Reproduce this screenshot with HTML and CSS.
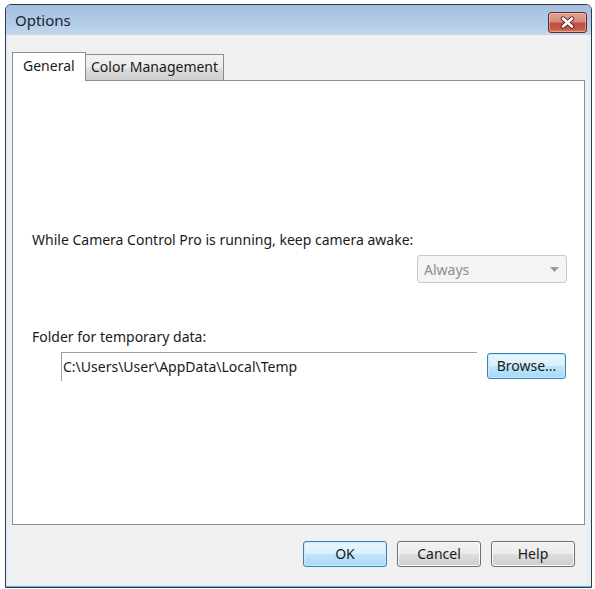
FILE: index.html
```html
<!DOCTYPE html>
<html>
<head>
<meta charset="utf-8">
<link rel="stylesheet" href="styles.css">
</head>
<body>
<div class="window">
  <div class="titlebar">
    <span class="title">Options</span>
    <div class="close">
      <svg width="19" height="13" viewBox="0 0 19 13">
        <path d="M5 2.5 L14 10.5 M14 2.5 L5 10.5" stroke="#5a2a24" stroke-width="4.4" stroke-linecap="round"/>
        <path d="M5 2.5 L14 10.5 M14 2.5 L5 10.5" stroke="#ffffff" stroke-width="2.6" stroke-linecap="round"/>
      </svg>
    </div>
  </div>
  <div class="client">
    <div class="tabs">
      <div class="tab selected">General</div>
      <div class="tab">Color Management</div>
    </div>
    <div class="panel">
      <div class="label first">While Camera Control Pro is running, keep camera awake:</div>
      <div class="combo-row">
        <div class="combo">
          <span>Always</span>
          <svg width="9" height="5" viewBox="0 0 9 5"><path d="M0 0 L9 0 L4.5 5 Z" fill="#9a9a9a"/></svg>
        </div>
      </div>
      <div class="label second">Folder for temporary data:</div>
      <div class="field-row">
        <div class="field">C:\Users\User\AppData\Local\Temp</div>
        <div class="btn hot browse">Browse...</div>
      </div>
    </div>
    <div class="footer">
      <div class="btn hot">OK</div>
      <div class="btn">Cancel</div>
      <div class="btn">Help</div>
    </div>
  </div>
</div>
</body>
</html>
```

FILE: styles.css
```css
html, body {
  margin: 0;
  padding: 0;
  background: #ffffff;
}
body {
  font-family: "Noto Sans", "Open Sans", sans-serif;
  font-size: 14px;
  color: #1a1a1a;
}
.window {
  margin: 4px 0 0 5px;
  width: 585px;
  height: 582px;
  border: 1px solid #2f3a44;
  border-radius: 6px 6px 0 0;
  background: #e6eef7;
  box-shadow: inset 0 -1px 0 #58bcdc;
  display: flex;
  flex-direction: column;
}
.titlebar {
  height: 30px;
  flex: none;
  display: flex;
  align-items: flex-start;
  justify-content: space-between;
  background: linear-gradient(to bottom, #a3bfdf 0%, #b2cbe6 60%, #c3d8ee 100%);
  border-radius: 5px 5px 0 0;
}
.title {
  font-size: 15px;
  color: #1b2430;
  margin: 5px 0 0 9px;
  line-height: 20px;
}
.close {
  width: 37px;
  height: 19px;
  margin: 7px 4px 0 0;
  border: 1px solid #5e2c27;
  border-radius: 3px;
  background: linear-gradient(to bottom, #e2a496 0%, #d4887a 45%, #c14f3b 55%, #c65b45 85%, #d6826b 100%);
  box-shadow: inset 0 0 0 1px rgba(255, 210, 200, 0.5);
  display: flex;
  align-items: center;
  justify-content: center;
}
.client {
  flex: 1;
  margin: 0 3px 3px 3px;
  background: #f0f0f0;
  padding: 17px 3px 0 3px;
  display: flex;
  flex-direction: column;
}
.tabs {
  height: 28px;
  display: flex;
  align-items: flex-end;
  position: relative;
  z-index: 2;
}
.tab {
  height: 26px;
  box-sizing: border-box;
  border: 1px solid #898c95;
  border-bottom: none;
  background: linear-gradient(to bottom, #f2f2f2 0%, #ebebeb 50%, #dddddd 51%, #cfcfcf 100%);
  padding: 0 5px;
  line-height: 24px;
  margin-left: -1px;
}
.tab.selected {
  height: 29px;
  margin-bottom: -1px;
  background: #ffffff;
  padding: 0 0 0 10px;
  line-height: 26px;
  margin-left: 0;
  width: 74px;
  position: relative;
  z-index: 3;
}
.panel {
  height: 445px;
  box-sizing: border-box;
  border: 1px solid #898c95;
  background: #ffffff;
  padding: 0 17px 0 19px;
  display: flex;
  flex-direction: column;
}
.label {
  line-height: 18px;
}
.label.first {
  margin-top: 150px;
}
.combo-row {
  display: flex;
  justify-content: flex-end;
  margin-top: 6px;
}
.combo {
  width: 150px;
  height: 28px;
  box-sizing: border-box;
  border: 1px solid #c9c9c9;
  border-radius: 3px;
  background: #f4f4f4;
  color: #8e8e8e;
  display: flex;
  align-items: center;
  justify-content: space-between;
  padding: 0 7px 0 6px;
}
.label.second {
  margin-top: 45px;
}
.field-row {
  display: flex;
  align-items: flex-start;
  margin-top: 6px;
  padding-left: 29px;
}
.field {
  width: 416px;
  height: 29px;
  box-sizing: border-box;
  border-top: 1px solid #a0a0a0;
  border-left: 1px solid #a0a0a0;
  padding: 5px 0 0 1px;
  line-height: 18px;
}
.btn {
  width: 84px;
  height: 26px;
  box-sizing: border-box;
  border: 1px solid #707070;
  border-radius: 3px;
  background: linear-gradient(to bottom, #f2f2f2 0%, #ebebeb 50%, #dddddd 51%, #cfcfcf 100%);
  box-shadow: inset 0 0 0 1px #fcfcfc;
  display: flex;
  align-items: center;
  justify-content: center;
  line-height: 18px;
}
.btn.hot {
  border-color: #3c7fb1;
  background: linear-gradient(to bottom, #eaf6fd 0%, #d9f0fc 50%, #bee6fd 51%, #a7d9f5 100%);
  box-shadow: inset 0 0 0 1px #c4ebff;
}
.browse {
  width: 79px;
  margin-left: 10px;
  margin-top: 1px;
}
.footer {
  display: flex;
  justify-content: flex-end;
  gap: 10px;
  margin-top: 16px;
  padding-right: 10px;
}
```
